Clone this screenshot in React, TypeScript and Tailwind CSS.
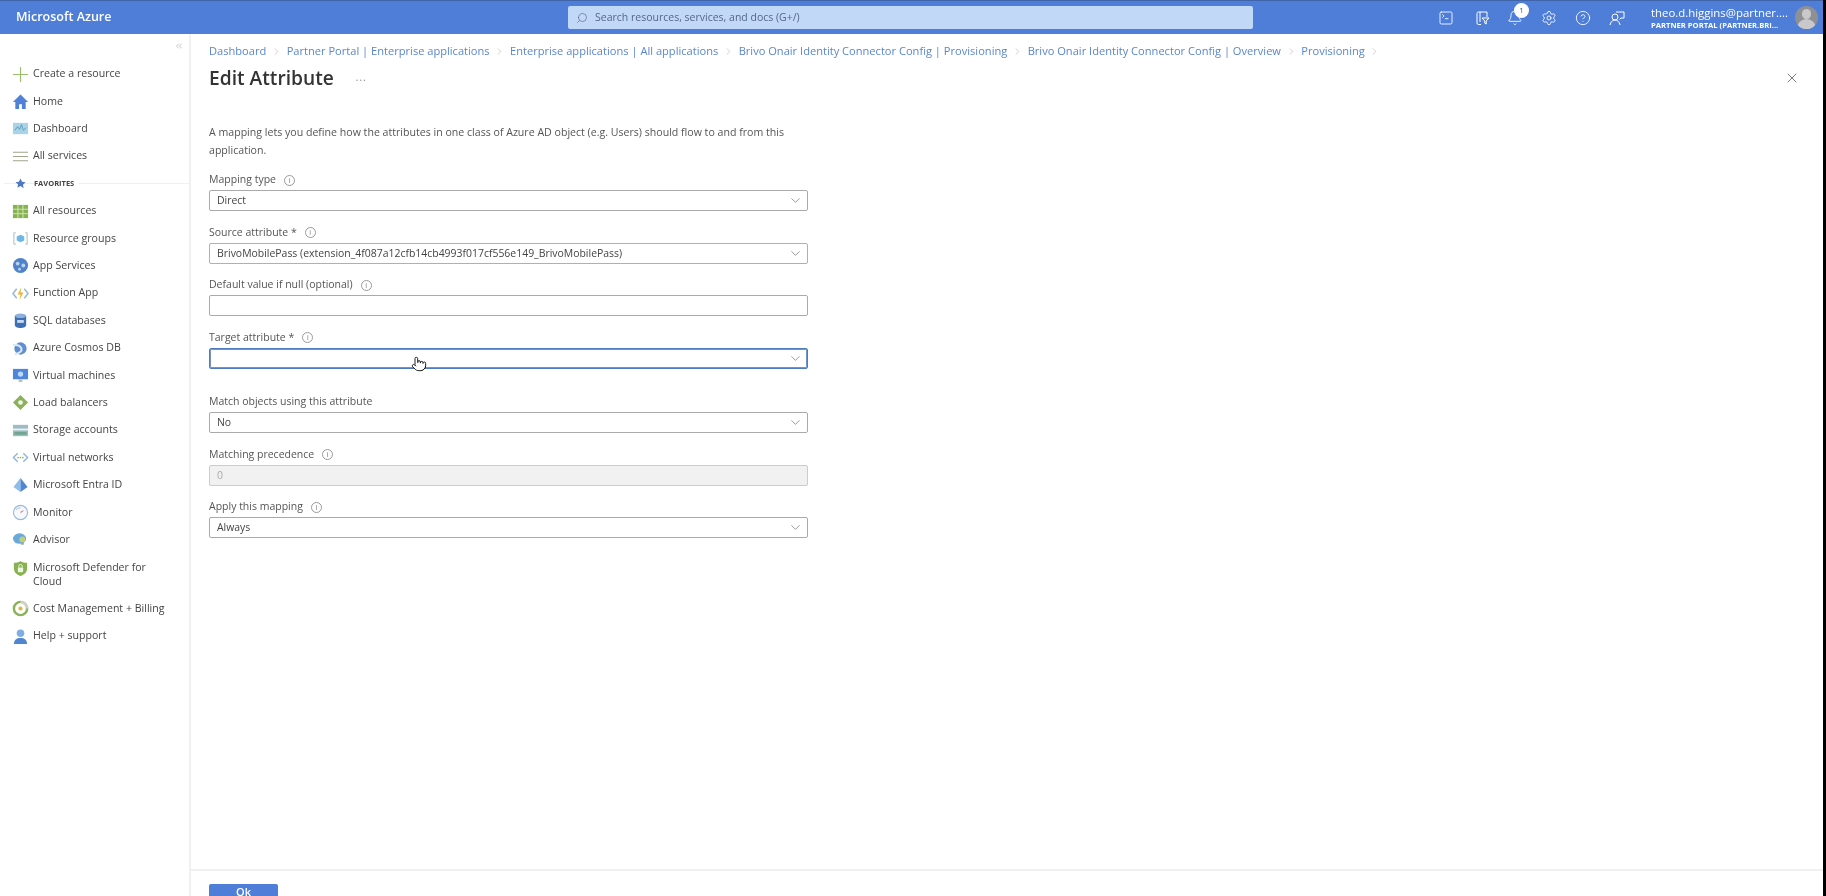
import React from "react";
import { Bell, ChevronDown, ChevronRight, ChevronsLeft, CircleHelp, Pointer, Search, Settings, SquareTerminal, X } from "lucide-react";

const font = "font-['Open_Sans','Noto_Sans',sans-serif]";

const Ic: React.FC<{ children: React.ReactNode }> = ({ children }) => (
  <svg viewBox="0 0 18 18" className="w-[17px] h-[17px] shrink-0">{children}</svg>
);

const icons: Record<string, React.ReactNode> = {
  create: (
    <Ic>
      <path d="M9 1v16M1 9h16" stroke="#9cbf6b" strokeWidth="1.2" />
    </Ic>
  ),
  home: (
    <Ic>
      <path d="M9 1.5 1 9.5h2.5V17h4v-5h3v5h4V9.5H17z" fill="#4f82d6" />
    </Ic>
  ),
  dashboard: (
    <Ic>
      <rect x="1" y="3" width="16" height="12" fill="#a9d3e6" />
      <path d="M3 11l3-4 2 3 2-5 2 6 3-3" stroke="#5a9cb8" fill="none" />
    </Ic>
  ),
  all: (
    <Ic>
      <path d="M1 4.5h16M1 9h16M1 13.5h16" stroke="#a3a58c" strokeWidth="1.3" />
    </Ic>
  ),
  resources: (
    <Ic>
      <path d="M1 2h16v14H1z" fill="#86b24f" />
      <path d="M6.3 2v14M11.6 2v14M1 6.6h16M1 11.3h16" stroke="#d5e6bd" strokeWidth="1" />
    </Ic>
  ),
  groups: (
    <Ic>
      <path d="M4 3H2v12h2M14 3h2v12h-2" stroke="#a8b4c4" fill="none" />
      <path d="M9 5l4 2v4l-4 2-4-2V7z" fill="#6fb7e4" />
    </Ic>
  ),
  app: (
    <Ic>
      <circle cx="9" cy="9" r="8" fill="#4f82c9" />
      <circle cx="6" cy="7" r="2" fill="#b6d4f0" />
      <circle cx="12" cy="9" r="2" fill="#b6d4f0" />
      <circle cx="8" cy="13" r="1.5" fill="#b6d4f0" />
    </Ic>
  ),
  func: (
    <Ic>
      <path d="M5 4 1 9l4 5M13 4l4 5-4 5" stroke="#9ab8d6" strokeWidth="1.6" fill="none" />
      <path d="M10 2 6 10h3l-1 6 4-8H9z" fill="#f0b429" />
    </Ic>
  ),
  sql: (
    <Ic>
      <path d="M3 4v10c0 1.6 2.7 3 6 3s6-1.4 6-3V4z" fill="#3f6fb5" />
      <ellipse cx="9" cy="4" rx="6" ry="2.4" fill="#8db0dc" />
      <rect x="5.5" y="8.5" width="7" height="3" fill="#c9dcf2" />
    </Ic>
  ),
  cosmos: (
    <Ic>
      <circle cx="9" cy="9" r="6.5" fill="#5f8fd0" />
      <path d="M1 5c4 0 8 1 9 4s-2 5-7 6" stroke="#d9e8f6" strokeWidth="2.2" fill="none" />
    </Ic>
  ),
  vm: (
    <Ic>
      <rect x="1" y="2" width="16" height="11" fill="#4f86dc" />
      <circle cx="9" cy="7.5" r="2.8" fill="#bcd8f5" />
      <rect x="7" y="13" width="4" height="3" fill="#b9c2cc" />
    </Ic>
  ),
  lb: (
    <Ic>
      <path d="M9 1l8 8-8 8-8-8z" fill="#8bb25a" />
      <circle cx="9" cy="9" r="2.5" fill="#f3f6ea" />
    </Ic>
  ),
  storage: (
    <Ic>
      <rect x="1" y="3" width="16" height="12" fill="#9fbcc5" />
      <rect x="1" y="7" width="16" height="1.8" fill="#eef4f5" />
      <rect x="2.5" y="10.5" width="13" height="3" fill="#72a48f" />
    </Ic>
  ),
  vnet: (
    <Ic>
      <path d="M6 4.5 1.5 9 6 13.5M12 4.5 16.5 9 12 13.5" stroke="#8cb4d8" strokeWidth="1.4" fill="none" />
      <circle cx="6.5" cy="9" r="0.9" fill="#8bb25a" />
      <circle cx="9" cy="9" r="0.9" fill="#8bb25a" />
      <circle cx="11.5" cy="9" r="0.9" fill="#8bb25a" />
    </Ic>
  ),
  entra: (
    <Ic>
      <path d="M9 1 1.5 10.5 9 16z" fill="#8fbdea" />
      <path d="M9 1l7.5 9.5L9 16z" fill="#4f86cf" />
    </Ic>
  ),
  monitor: (
    <Ic>
      <circle cx="9" cy="9" r="7.5" fill="#f6f9fc" stroke="#9db9da" strokeWidth="1.2" />
      <path d="M9 9l3-2" stroke="#d77a8a" strokeWidth="1.2" />
      <path d="M4 6.5C5 5 7 4 9 4" stroke="#9db9da" fill="none" />
    </Ic>
  ),
  advisor: (
    <Ic>
      <ellipse cx="8" cy="8" rx="7" ry="5.5" fill="#69a9d9" />
      <circle cx="11" cy="9" r="3.2" fill="#bfcf7e" />
      <rect x="9.5" y="12" width="3" height="2.5" fill="#9aa6ad" />
    </Ic>
  ),
  defender: (
    <Ic>
      <path d="M9 1c2 1.6 4.5 2 7 2v6c0 4-3 6.5-7 8-4-1.5-7-4-7-8V3c2.500 0 5-.4 7-2z" fill="#86b24f" />
      <rect x="6.200" y="8" width="5.600" height="5" rx="1" fill="#eef5e2" />
      <path d="M7.200 8V6.500a1.800 1.800 0 0 1 3.600 0V8" stroke="#eef5e2" fill="none" />
    </Ic>
  ),
  cost: (
    <Ic>
      <circle cx="9" cy="9" r="7" fill="none" stroke="#8bb25a" strokeWidth="2.6" />
      <path d="M9 2a7 7 0 0 1 7 7" stroke="#d0d4c4" strokeWidth="2.600" fill="none" />
      <circle cx="9" cy="9" r="2.2" fill="#d9b64a" />
    </Ic>
  ),
  help: (
    <Ic>
      <circle cx="9" cy="5.500" r="4" fill="#7eaee3" />
      <path d="M2 17c0-4.500 3-6.500 7-6.500s7 2 7 6.500z" fill="#4f86cf" />
    </Ic>
  ),
};

const navTop = [
  { icon: "create", label: "Create a resource" },
  { icon: "home", label: "Home" },
  { icon: "dashboard", label: "Dashboard" },
  { icon: "all", label: "All services" },
];

const navFav = [
  { icon: "resources", label: "All resources" },
  { icon: "groups", label: "Resource groups" },
  { icon: "app", label: "App Services" },
  { icon: "func", label: "Function App" },
  { icon: "sql", label: "SQL databases" },
  { icon: "cosmos", label: "Azure Cosmos DB" },
  { icon: "vm", label: "Virtual machines" },
  { icon: "lb", label: "Load balancers" },
  { icon: "storage", label: "Storage accounts" },
  { icon: "vnet", label: "Virtual networks" },
  { icon: "entra", label: "Microsoft Entra ID" },
  { icon: "monitor", label: "Monitor" },
  { icon: "advisor", label: "Advisor" },
  { icon: "defender", label: "Microsoft Defender for Cloud" },
  { icon: "cost", label: "Cost Management + Billing" },
  { icon: "help", label: "Help + support" },
];

const crumbs = [
  "Dashboard",
  "Partner Portal | Enterprise applications",
  "Enterprise applications | All applications",
  "Brivo Onair Identity Connector Config | Provisioning",
  "Brivo Onair Identity Connector Config | Overview",
  "Provisioning",
];

const NavRow: React.FC<{ icon: string; label: string }> = ({ icon, label }) => {
  const twoLine = label.length > 26;
  return (
    <div className={twoLine ? "flex items-start gap-[4px] pl-3 h-[41.5px] pt-[6px]" : "flex items-center gap-[4px] pl-3 h-[27.4px]"}>
      {icons[icon]}
      <span className={twoLine ? "w-[135px] text-[10.6px] leading-[14px] text-[#444]" : "text-[10.6px] text-[#444] whitespace-nowrap"}>{label}</span>
    </div>
  );
};

const Info = () => (
  <span className="ml-[8px] w-[11px] h-[11px] rounded-full border border-[#9a9a9a] flex items-center justify-center text-[7px] leading-none text-[#777]">
    i
  </span>
);

const Chevron = () => <ChevronDown className="w-[15px] h-[15px] text-[#777]" strokeWidth={1.2} />;

const Field: React.FC<{
  label: string;
  info?: boolean;
  value?: string;
  select?: boolean;
  boxClass?: string;
  valueClass?: string;
  wrapClass?: string;
  children?: React.ReactNode;
}> = ({ label, info = true, value, select = true, boxClass = "border-[#aaa]", valueClass = "text-[#444]", wrapClass = "mb-[11.5px]", children }) => (
  <div className={wrapClass}>
    <div className="h-5 flex items-center text-[#555] text-[10.5px]">
      {label}
      {info && <Info />}
    </div>
    <div className={`relative h-[21px] border rounded-[2px] flex items-center justify-between pl-[7px] pr-[4px] ${boxClass}`}>
      <span className={`text-[10.45px] pt-[1px] ${valueClass}`}>{value}</span>
      {select && <Chevron />}
      {children}
    </div>
  </div>
);

export default function App() {
  return (
    <div className="w-[1826px] h-[896px] overflow-hidden bg-black flex">
      <div className={`${font} w-[1823px] h-[896px] overflow-hidden bg-white flex flex-col blur-[0.4px]`}>
        {/* top bar */}
        <header className="h-[34px] shrink-0 bg-[#4e7ed8] border-t border-[#3f64a8] flex items-center text-white">
          <div className="w-[568px] pl-4 text-[12.5px] font-semibold">Microsoft Azure</div>
          <div className="w-[685px] h-[23px] bg-[#c1d8f6] rounded-[2px] flex items-center pl-[8px] gap-[7px] text-[10.5px] text-[#55678a]">
            <Search className="w-[12px] h-[12px] -scale-x-100" strokeWidth={1.3} />
            Search resources, services, and docs (G+/)
          </div>
          <div className="flex items-center ml-[185px] gap-[18px] w-[188px]">
            <SquareTerminal className="w-4 h-4" strokeWidth={1.3} />
            <svg viewBox="0 0 16 16" className="w-4 h-4 fill-none stroke-white ml-[2px]">
              <path d="M3 13V3.500A1.500 1.500 0 0 1 4.500 2H13v5M3 13a1.500 1.500 0 0 0 1.500 1.500H7M6 2v10" />
              <path d="M8 8h7l-2.800 3v3l-1.400-.8V11z" />
            </svg>
            <div className="relative -ml-[1px]">
              <Bell className="w-4 h-4" strokeWidth={1.3} />
              <span className="absolute -top-[7px] left-[7px] w-[15px] h-[15px] rounded-full bg-white text-[#3a5a90] text-[8px] flex items-center justify-center">1</span>
            </div>
            <Settings className="w-4 h-4" strokeWidth={1.3} />
            <CircleHelp className="w-4 h-4" strokeWidth={1.3} />
            <svg viewBox="0 0 16 16" className="w-4 h-4 fill-none stroke-white">
              <circle cx="6" cy="7" r="3" />
              <path d="M1 15c.5-3 2.500-5 5-5s4.500 2 5 5M7 2h8v6h-3l-1.500 1.500" />
            </svg>
          </div>
          <div className="ml-[25px] w-[136px] flex flex-col">
            <span className="text-[11.4px] leading-[14px] whitespace-nowrap">theo.d.higgins@partner....</span>
            <span className="text-[7.6px] leading-[10px] font-bold whitespace-nowrap">PARTNER PORTAL (PARTNER.BRI...</span>
          </div>
          <div className="ml-[8px] w-[23px] h-[23px] rounded-full bg-[#8f9094] overflow-hidden relative">
            <span className="absolute left-[7px] top-[3px] w-[9px] h-[10px] rounded-full bg-[#c9c9cb]" />
            <span className="absolute left-[2px] top-[13px] w-[19px] h-[14px] rounded-t-full bg-[#c9c9cb]" />
          </div>
        </header>

        <div className="flex flex-1 min-h-0">
          {/* left nav */}
          <aside className="w-[191px] shrink-0 border-r-2 border-[#f0f0f0]">
            <div className="h-[26.5px] flex justify-end items-start pt-[7px] pr-[5px]">
              <ChevronsLeft className="w-[10px] h-[10px] text-[#bbb]" />
            </div>
            {navTop.map((n) => (
              <NavRow key={n.label} {...n} />
            ))}
            <div className="relative h-[27.4px] flex items-center pl-[15px] gap-[8px]">
              <span className="absolute left-[4px] right-0 top-[13px] border-t border-[#f0f0f0]" />
              <svg viewBox="0 0 12 12" className="relative w-[11px] h-[11px] fill-[#4f78c4]">
                <path d="M6 .5l1.700 3.600 3.800.5-2.800 2.700.7 3.900L6 8.800l-3.400 1.900.7-3.900L.5 4.600l3.800-.5z" />
              </svg>
              <span className="relative bg-white pr-1 text-[7.500px] font-bold text-[#444]">FAVORITES</span>
            </div>
            {navFav.map((n) => (
              <NavRow key={n.label} {...n} />
            ))}
          </aside>

          {/* blade */}
          <main className="flex-1 min-w-0 flex flex-col">
            <div className="flex-1 min-h-0 pl-[18px] pr-[23px]">
              <nav className="h-5 mt-[7px] flex items-center text-[11.1px] text-[#5a86cf] whitespace-nowrap">
                {crumbs.map((c) => (
                  <React.Fragment key={c}>
                    <span>{c}</span>
                    <ChevronRight className="w-[11px] h-[11px] mx-[4.7px] text-[#aaa]" strokeWidth={1.2} />
                  </React.Fragment>
                ))}
              </nav>
              <div className="mt-[3px] h-[28px] flex items-center">
                <h1 className="text-[19.200px] font-semibold text-[#333]">Edit Attribute</h1>
                <span className="ml-[22px] text-[10px] text-[#888] tracking-[1px] -mt-[2px]">...</span>
                <X className="ml-auto w-[16px] h-[16px] text-[#555]" strokeWidth={1.2} />
              </div>
              <div className="w-[599px] mt-[31px]">
                <p className="text-[10.6px] leading-[18px] text-[#555] mb-[11px]">
                  A mapping lets you define how the attributes in one class of Azure AD object (e.g. Users) should flow to and from this application.
                </p>
                <Field label="Mapping type" value="Direct" />
                <Field label="Source attribute *" value="BrivoMobilePass (extension_4f087a12cfb14cb4993f017cf556e149_BrivoMobilePass)" boxClass="border-[#b5a8c8]" />
                <Field label="Default value if null (optional)" select={false} />
                <Field label="Target attribute *" boxClass="border-[#4f7cc0] shadow-[inset_0_0_0_1px_#6f95cc]" wrapClass="mb-[23.5px]">
                  <Pointer className="absolute left-[201px] top-[7px] w-4 h-4 text-black fill-white" strokeWidth={1.3} />
                </Field>
                <Field label="Match objects using this attribute" info={false} value="No" />
                <Field label="Matching precedence" value="0" select={false} boxClass="border-[#ccc] bg-[#f1f1f1]" valueClass="text-[#aaa]" />
                <Field label="Apply this mapping" value="Always" />
              </div>
            </div>
            <footer className="h-[27px] shrink-0 border-t-2 border-[#f0f0f0] pt-[13px] pl-[18px] overflow-hidden">
              <button className="w-[69px] h-[28px] bg-[#4e7ed8] text-white text-[11px] font-semibold rounded-[2px] flex justify-center">Ok</button>
            </footer>
          </main>
        </div>
      </div>
      <div className="w-[3px] bg-black" />
    </div>
  );
}
